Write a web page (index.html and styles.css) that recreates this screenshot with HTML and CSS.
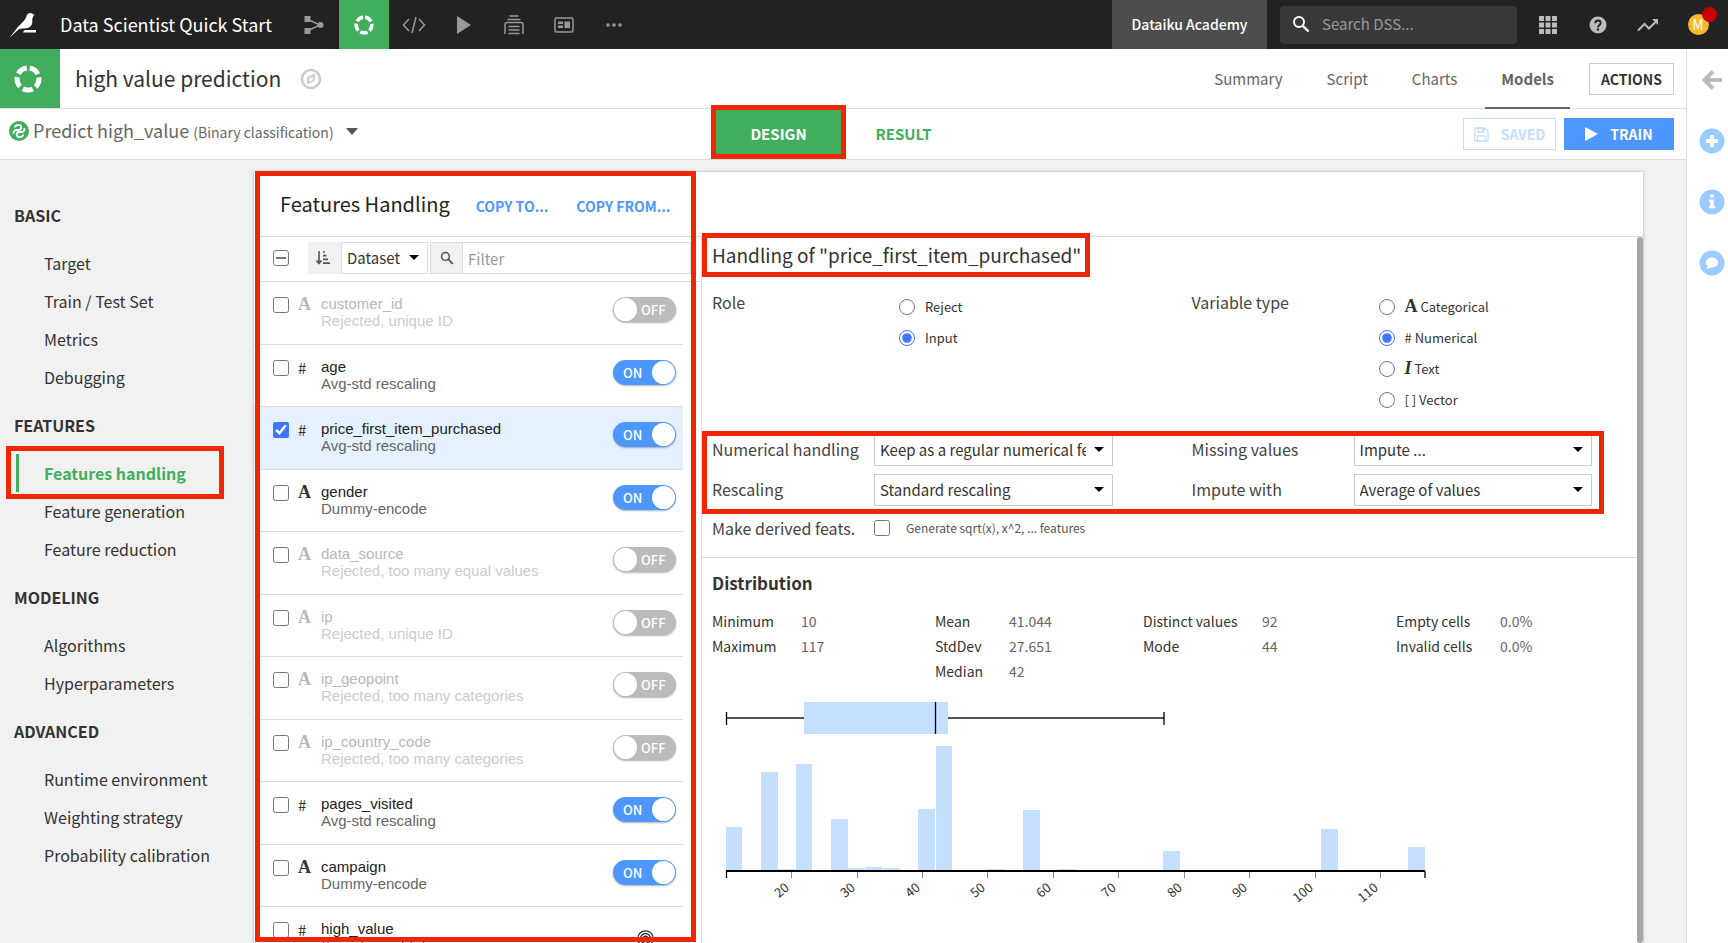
FILE: index.html
```html
<!DOCTYPE html>
<html lang="en">
<head>
<meta charset="utf-8">
<title>high value prediction</title>
<link rel="stylesheet" href="styles.css">
</head>
<body>
<svg class="defs" aria-hidden="true">
  <symbol id="lab" viewBox="0 0 28 28">
    <circle cx="14" cy="14" r="11" fill="none" stroke="currentColor" stroke-width="5" stroke-dasharray="10.4 3.42" stroke-dashoffset="-1.71" transform="rotate(-90 14 14)"/>
  </symbol>
  <symbol id="search" viewBox="0 0 18 18">
    <circle cx="7" cy="7" r="5" fill="none" stroke="currentColor" stroke-width="2"/>
    <path d="M10.8 10.8 16.5 16.5" stroke="currentColor" stroke-width="2.4"/>
  </symbol>
</svg>

<header class="topbar">
  <a class="logo" href="#" aria-label="Home">
    <svg width="28" height="26" viewBox="0 0 28 26"><path fill="#fff" d="M25.5 3 22.6 1.3C20 .4 18 1.9 17.4 4.4 16.8 7 13 11 9.5 14.3L.5 25.8 9.8 17.2C12 16 14 16.6 17 16.2 21.500 15.600 23.500 13 23.300 9 23.200 6.500 23.600 4.500 25.500 3ZM14.500 19.200 16 18h11v2.500H14z"/></svg>
  </a>
  <a class="project" href="#">Data Scientist Quick Start</a>
  <nav class="apps" aria-label="Project sections">
    <a href="#" aria-label="Flow"><svg width="20" height="20" viewBox="0 0 20 20"><path d="M3 4 16 10 3 16" fill="none" stroke="currentColor" stroke-width="1.500"/><path fill="currentColor" d="M.5 1h6v6h-6zM.5 13h6v6h-6z"/><circle cx="16.500" cy="10" r="3" fill="currentColor"/></svg></a>
    <a class="current" href="#" aria-label="Lab"><svg width="20" height="20"><use href="#lab"/></svg></a>
    <a href="#" aria-label="Code"><svg width="24" height="20" viewBox="0 0 24 20"><path d="M7 4 1.500 10 7 16M17 4l5.500 6L17 16M14 2 10 18" fill="none" stroke="currentColor" stroke-width="1.500"/></svg></a>
    <a href="#" aria-label="Jobs"><svg width="14" height="18" viewBox="0 0 14 18"><path d="M0 0 14 9 0 18z" fill="currentColor"/></svg></a>
    <a href="#" aria-label="Automation"><svg width="20" height="20" viewBox="0 0 20 20"><path d="M5.500 1h9M3.500 4.500h13M1 19V9.500Q1 7.500 3 7.500h14q2 0 2 2V19M4.500 11.500h11M4.500 15h11M4.500 18.500h11" fill="none" stroke="currentColor" stroke-width="1.500"/></svg></a>
    <a href="#" aria-label="Dashboards"><svg width="20" height="16" viewBox="0 0 20 16"><rect x="1" y="1" width="18" height="14" rx="1.500" fill="none" stroke="currentColor" stroke-width="1.500"/><path d="M4 4.500h5V7H4zM4 8.500h5V11H4zM10.500 4.500H16V11h-5.500z" fill="currentColor"/></svg></a>
    <a href="#" aria-label="More"><svg width="16" height="4" viewBox="0 0 16 4"><g fill="currentColor"><circle cx="2" cy="2" r="1.800"/><circle cx="8" cy="2" r="1.800"/><circle cx="14" cy="2" r="1.800"/></g></svg></a>
  </nav>
  <a class="academy" href="#">Dataiku Academy</a>
  <label class="search">
    <svg width="18" height="18"><use href="#search"/></svg>
    <input type="search" placeholder="Search DSS..." aria-label="Search DSS">
  </label>
  <nav class="tools" aria-label="Account">
    <a href="#" aria-label="Applications"><svg width="18" height="18" viewBox="0 0 18 18"><path fill="currentColor" d="M0 0h5v5H0zM6.500 0h5v5h-5zM13 0h5v5h-5zM0 6.500h5v5H0zM6.500 6.500h5v5h-5zM13 6.500h5v5h-5zM0 13h5v5H0zM6.500 13h5v5h-5zM13 13h5v5h-5z"/></svg></a>
    <a href="#" aria-label="Help"><svg width="18" height="18" viewBox="0 0 18 18"><circle cx="9" cy="9" r="8.500" fill="currentColor"/><path d="M6.300 7.200Q6.300 4.500 9 4.500T11.700 7Q11.700 8.300 10.300 9.200 9 10 9 11.500" fill="none" stroke="#222" stroke-width="1.800"/><circle cx="9" cy="13.600" r="1.200" fill="#222"/></svg></a>
    <a href="#" aria-label="Activity"><svg width="22" height="14" viewBox="0 0 22 14"><path d="M1 12.500 7.500 6l4.500 4.500L19.500 3" fill="none" stroke="currentColor" stroke-width="2"/><path d="M15 1h6v6z" fill="currentColor"/></svg></a>
    <a href="#" aria-label="Profile"><span class="avatar">M<span class="badge"></span></span></a>
  </nav>
</header>

<div class="shell">
  <div class="page">
    <div class="titlebar">
      <span class="lab-tile"><svg width="28" height="28"><use href="#lab"/></svg></span>
      <h1>high value prediction</h1>
      <svg class="compass" width="22" height="22" viewBox="0 0 22 22"><circle cx="11" cy="11" r="9" fill="none" stroke="#ccc" stroke-width="2.500"/><path d="M14.800 5.500v7.200L7.200 16.500V9.300zM9.200 10.500v3.300l3.500-1.800V8.700z" fill="#ccc" fill-rule="evenodd"/></svg>
      <nav class="tabs" aria-label="Analysis">
        <a href="#">Summary</a><a href="#">Script</a><a href="#">Charts</a><a class="current" href="#">Models</a>
      </nav>
      <button class="actions" type="button">ACTIONS</button>
    </div>

    <div class="taskbar">
      <button class="task" type="button">
        <svg width="20" height="20" viewBox="0 0 20 20"><circle cx="10" cy="10" r="10" fill="#41ae5e"/><path d="M5.800 6.500Q6 4 9.300 4T12.200 6.500Q12.200 9 9.500 9H8Q4.500 9 4.500 12.800M14.200 13.500Q14 16 10.700 16T7.800 13.500Q7.800 11 10.500 11H12Q15.500 11 15.500 7.200" fill="none" stroke="#fff" stroke-width="1.900"/></svg>
        <span>Predict high_value <small>(Binary classification)</small></span>
        <i class="caret"></i>
      </button>
      <div class="modes">
        <button class="mode design" type="button">DESIGN</button>
        <button class="mode" type="button">RESULT</button>
      </div>
      <div class="task-actions">
        <button class="saved" type="button" disabled><svg width="15" height="15" viewBox="0 0 15 15"><path d="M1 1h10l3 3v10H1zM4 1v4h6V1M3.500 14V9h8v5" fill="none" stroke="currentColor" stroke-width="1.300"/><path d="M8 1.500h1.500V4H8z" fill="currentColor"/></svg>SAVED</button>
        <button class="train" type="button"><svg width="13" height="14" viewBox="0 0 13 14"><path d="M0 0 13 7 0 14z" fill="currentColor"/></svg>TRAIN</button>
      </div>
    </div>

    <div class="workspace">
      <nav class="sidenav" aria-label="Design settings">
        <h2>BASIC</h2>
        <ul><li><a href="#">Target</a></li><li><a href="#">Train / Test Set</a></li><li><a href="#">Metrics</a></li><li><a href="#">Debugging</a></li></ul>
        <h2>FEATURES</h2>
        <ul><li class="current"><a href="#">Features handling</a></li><li><a href="#">Feature generation</a></li><li><a href="#">Feature reduction</a></li></ul>
        <h2>MODELING</h2>
        <ul><li><a href="#">Algorithms</a></li><li><a href="#">Hyperparameters</a></li></ul>
        <h2>ADVANCED</h2>
        <ul><li><a href="#">Runtime environment</a></li><li><a href="#">Weighting strategy</a></li><li><a href="#">Probability calibration</a></li></ul>
      </nav>

      <main class="card">
        <section class="features">
          <div class="features-head">
            <h2>Features Handling</h2>
            <button type="button">COPY TO...</button>
            <button type="button">COPY FROM...</button>
          </div>
          <div class="filters">
            <input class="some" type="checkbox" aria-label="Select all features">
            <span class="addon sort"><svg width="14" height="14" viewBox="0 0 14 14"><path d="M3 0v12M.5 9.500 3 12.500l2.500-3" fill="none" stroke="currentColor" stroke-width="1.600"/><path d="M7 1h2M7 4.700h3.500M7 8.400h5M7 12.200h7" stroke="currentColor" stroke-width="1.700"/></svg></span>
            <span class="select by"><select aria-label="Sort by"><option>Dataset</option></select></span>
            <span class="addon find"><svg width="14" height="14"><use href="#search"/></svg></span>
            <input class="filter" type="text" placeholder="Filter" aria-label="Filter features">
          </div>
          <ul class="rows">
            <li class="off"><input type="checkbox" aria-label="Select customer_id"><b class="kind letter">A</b><div class="name">customer_id<span>Rejected, unique ID</span></div><label class="toggle"><input type="checkbox"><span>OFF</span></label></li>
            <li><input type="checkbox" aria-label="Select age"><b class="kind">#</b><div class="name">age<span>Avg-std rescaling</span></div><label class="toggle"><input type="checkbox" checked><span>ON</span></label></li>
            <li class="selected"><input type="checkbox" checked aria-label="Select price_first_item_purchased"><b class="kind">#</b><div class="name">price_first_item_purchased<span>Avg-std rescaling</span></div><label class="toggle"><input type="checkbox" checked><span>ON</span></label></li>
            <li><input type="checkbox" aria-label="Select gender"><b class="kind letter">A</b><div class="name">gender<span>Dummy-encode</span></div><label class="toggle"><input type="checkbox" checked><span>ON</span></label></li>
            <li class="off"><input type="checkbox" aria-label="Select data_source"><b class="kind letter">A</b><div class="name">data_source<span>Rejected, too many equal values</span></div><label class="toggle"><input type="checkbox"><span>OFF</span></label></li>
            <li class="off"><input type="checkbox" aria-label="Select ip"><b class="kind letter">A</b><div class="name">ip<span>Rejected, unique ID</span></div><label class="toggle"><input type="checkbox"><span>OFF</span></label></li>
            <li class="off"><input type="checkbox" aria-label="Select ip_geopoint"><b class="kind letter">A</b><div class="name">ip_geopoint<span>Rejected, too many categories</span></div><label class="toggle"><input type="checkbox"><span>OFF</span></label></li>
            <li class="off"><input type="checkbox" aria-label="Select ip_country_code"><b class="kind letter">A</b><div class="name">ip_country_code<span>Rejected, too many categories</span></div><label class="toggle"><input type="checkbox"><span>OFF</span></label></li>
            <li><input type="checkbox" aria-label="Select pages_visited"><b class="kind">#</b><div class="name">pages_visited<span>Avg-std rescaling</span></div><label class="toggle"><input type="checkbox" checked><span>ON</span></label></li>
            <li><input type="checkbox" aria-label="Select campaign"><b class="kind letter">A</b><div class="name">campaign<span>Dummy-encode</span></div><label class="toggle"><input type="checkbox" checked><span>ON</span></label></li>
            <li><input type="checkbox" aria-label="Select high_value"><b class="kind">#</b><div class="name">high_value<span>(target variable)</span></div><svg class="target" width="17" height="17" viewBox="0 0 17 17"><g fill="none" stroke="#333" stroke-width="1.300"><circle cx="8.500" cy="8.500" r="7.700"/><circle cx="8.500" cy="8.500" r="5"/><circle cx="8.500" cy="8.500" r="2.300"/></g></svg></li>
          </ul>
        </section>

        <section class="detail">
          <div class="detail-head"></div>
          <div class="detail-scroll">
            <div class="detail-body">
              <h2 class="detail-title">Handling of "price_first_item_purchased"</h2>
              <div class="settings types">
                <span class="caption" id="role">Role</span>
                <div class="radios" role="radiogroup" aria-labelledby="role">
                  <label><input type="radio" name="role">Reject</label>
                  <label><input type="radio" name="role" checked>Input</label>
                </div>
                <span class="caption second" id="vtype">Variable type</span>
                <div class="radios" role="radiogroup" aria-labelledby="vtype">
                  <label><input type="radio" name="vtype"><span><b class="glyph">A</b> Categorical</span></label>
                  <label><input type="radio" name="vtype" checked>#&nbsp;Numerical</label>
                  <label><input type="radio" name="vtype"><span><b class="glyph slanted">I</b> Text</span></label>
                  <label><input type="radio" name="vtype">[&nbsp;]&nbsp;Vector</label>
                </div>
              </div>
              <div class="settings handling">
                <label class="caption" for="handling">Numerical handling</label>
                <span class="select"><select id="handling"><option>Keep as a regular numerical feature</option></select></span>
                <label class="caption second" for="missing">Missing values</label>
                <span class="select"><select id="missing"><option>Impute ...</option></select></span>
                <label class="caption" for="rescaling">Rescaling</label>
                <span class="select"><select id="rescaling"><option>Standard rescaling</option></select></span>
                <label class="caption second" for="impute">Impute with</label>
                <span class="select"><select id="impute"><option>Average of values</option></select></span>
              </div>
              <div class="settings derived">
                <span class="caption">Make derived feats.</span>
                <label><input type="checkbox">Generate sqrt(x), x^2, ... features</label>
              </div>
              <div class="distribution">
                <h3>Distribution</h3>
                <table>
                  <tr><th>Minimum</th><td>10</td><th>Mean</th><td>41.044</td><th>Distinct values</th><td>92</td><th>Empty cells</th><td>0.0%</td></tr>
                  <tr><th>Maximum</th><td>117</td><th>StdDev</th><td>27.651</td><th>Mode</th><td>44</td><th>Invalid cells</th><td>0.0%</td></tr>
                  <tr><th></th><td></td><th>Median</th><td>42</td><th></th><td></td><th></th><td></td></tr>
                </table>
                <svg class="chart" width="724" height="224" viewBox="0 0 724 224" role="img" aria-label="Box plot and histogram">
                  <g transform="translate(14 0)">
                    <path d="M0 28H438" stroke="#555" stroke-width="2"/>
                    <path d="M.5 22v13M438 22v13" stroke="#000" stroke-width="1.300"/>
                    <path fill="#c4dfff" d="M78 12h144v32H78z"/>
                    <path d="M209.500 12v32" stroke="#000" stroke-width="1.300"/>
                    <path fill="#c4dfff" d="M0 137h16v43H0zM35 82h17v98H35zM70 74h16v106H70zM105 129h17v51H105zM192 119h17v61H192zM210 56h16v124H210zM297 120h17v60H297zM437 161h17v19H437zM595 139h17v41H595zM682 157h17v23H682zM140 177h16v3H140zM122 178h17v2H122zM157 178h17v2H157zM52 179h17v1H52zM262 179h17v1H262zM332 179h17v1H332z"/>
                    <path d="M65.500 182v6M131.500 182v6M196.500 182v6M261.500 182v6M327.500 182v6M392.500 182v6M458.500 182v6M523.500 182v6M589.500 182v6M654.500 182v6" stroke="#888"/>
                    <path d="M0 181H699" stroke="#000" stroke-width="2"/>
                    <path d="M.5 181v7M699 181v7" stroke="#000" stroke-width="1.300"/>
                    <g class="ticks">
                      <text transform="translate(64 199) rotate(-40)">20</text>
                      <text transform="translate(130 199) rotate(-40)">30</text>
                      <text transform="translate(195 199) rotate(-40)">40</text>
                      <text transform="translate(260 199) rotate(-40)">50</text>
                      <text transform="translate(326 199) rotate(-40)">60</text>
                      <text transform="translate(391 199) rotate(-40)">70</text>
                      <text transform="translate(457 199) rotate(-40)">80</text>
                      <text transform="translate(522 199) rotate(-40)">90</text>
                      <text transform="translate(588 199) rotate(-40)">100</text>
                      <text transform="translate(653 199) rotate(-40)">110</text>
                    </g>
                  </g>
                </svg>
              </div>
            </div>
            <div class="scrollbar"></div>
          </div>
        </section>
      </main>
    </div>
  </div>

  <aside class="rail">
    <button type="button" aria-label="Open panel"><svg width="20" height="20" viewBox="0 0 20 20"><path d="M11 1.500 2.500 10l8.500 8.500M3 10h17" fill="none" stroke="#bbb" stroke-width="4"/></svg></button>
    <button type="button" aria-label="Add"><svg width="26" height="26" viewBox="0 0 26 26"><circle cx="13" cy="13" r="12.500" fill="#9accff"/><path d="M13 7v12M7 13h12" stroke="#fff" stroke-width="4"/></svg></button>
    <button type="button" aria-label="Details"><svg width="26" height="26" viewBox="0 0 26 26"><circle cx="13" cy="13" r="12.500" fill="#9accff"/><path d="M11.200 5.500h3.600v3h-3.600zM9.800 10.500h5v6.500h1.400v2.300H9.800V17h1.400v-4.200H9.800z" fill="#fff"/></svg></button>
    <button type="button" aria-label="Discussions"><svg width="26" height="26" viewBox="0 0 26 26"><circle cx="13" cy="13" r="12.500" fill="#9accff"/><ellipse cx="13" cy="12.500" rx="6.300" ry="5" fill="#fff"/><path d="M9 15.500 7.500 19.200 13 17z" fill="#fff"/></svg></button>
  </aside>
</div>
</body>
</html>
```

FILE: styles.css
```css
* { box-sizing: border-box; }

:root {
  --ui: "Noto Sans CJK SC", "Noto Sans", sans-serif;
  --green: #41ae5e;
  --blue: #4e97fe;
  --line: #ddd;
  --mark: #ee2700;
}

body {
  margin: 0;
  height: 100vh;
  display: flex;
  flex-direction: column;
  overflow: hidden;
  background: #fff;
  color: #333;
  font-family: var(--ui);
  font-size: 14px;
  line-height: 20px;
}

.defs { display: none; }
svg { display: block; flex: none; }
a { color: inherit; text-decoration: none; }
h1, h2, h3, ul { margin: 0; padding: 0; font-weight: 400; }
ul { list-style: none; }
button, input, select { font: inherit; color: inherit; }
button { padding: 0; border: 0; background: none; cursor: pointer; }
input[type="checkbox"], input[type="radio"] {
  flex: none;
  width: 16px;
  height: 16px;
  margin: 0;
  accent-color: #4076ff;
}

/* Top bar */
.topbar {
  flex: none;
  display: flex;
  align-items: center;
  height: 49px;
  padding-right: 5px;
  background: #222;
  color: #fff;
}
.logo { width: 60px; padding-left: 9px; }
.project { width: 229px; padding-bottom: 2px; font-size: 18px; white-space: nowrap; }
.apps, .tools { display: flex; align-self: stretch; }
.apps a, .tools a {
  width: 50px;
  display: flex;
  align-items: center;
  justify-content: center;
  color: #999;
}
.tools a { color: #bbb; }
.apps .current { background: var(--green); color: #fff; }
.academy {
  align-self: stretch;
  width: 155px;
  margin-left: auto;
  background: #4d4d4d;
  font-weight: 500;
  line-height: 49px;
  text-align: center;
}
.search {
  display: flex;
  align-items: center;
  gap: 10px;
  width: 237px;
  height: 38px;
  margin: 0 6px 0 13px;
  padding: 0 12px 2px;
  border-radius: 4px;
  background: #383838;
}
.search input {
  width: 100%;
  min-width: 0;
  border: 0;
  outline: 0;
  background: none;
  font-size: 15px;
}
.search input::placeholder { color: #999; }
.avatar {
  position: relative;
  width: 21px;
  height: 21px;
  border-radius: 50%;
  background: #f4b92f;
  color: #fff;
  font-size: 14px;
  text-align: center;
}
.badge {
  position: absolute;
  top: -7px;
  right: -8px;
  width: 15px;
  height: 15px;
  border-radius: 50%;
  background: #c80000;
}

/* Shell */
.shell { flex: 1; min-height: 0; display: flex; }
.page { flex: 1; min-width: 0; display: flex; flex-direction: column; }
.rail {
  width: 42px;
  border-left: 1px solid var(--line);
  padding: 15px 0 0 9px;
}
.rail button {
  display: flex;
  align-items: center;
  justify-content: center;
  width: 32px;
  height: 32px;
  margin-bottom: 29px;
}

.titlebar {
  flex: none;
  display: flex;
  align-items: center;
  height: 60px;
  padding-right: 12px;
  border-bottom: 1px solid var(--line);
}
.lab-tile {
  display: flex;
  align-items: center;
  justify-content: center;
  align-self: stretch;
  width: 60px;
  padding-right: 4px;
  background: var(--green);
  color: #fff;
}
.titlebar h1 { margin-left: 15px; padding-bottom: 2px; font-size: 21px; line-height: 32px; }
.compass { margin-left: 19px; }
.tabs { display: flex; align-self: stretch; gap: 12px; margin-left: auto; }
.tabs a {
  height: 60px;
  padding: 0 16px;
  color: #666;
  font-size: 15px;
  line-height: 59px;
}
.tabs .current { border-bottom: 2px solid #666; font-weight: 700; }
.actions {
  width: 85px;
  height: 32px;
  margin-left: 19px;
  border: 1px solid #ccc;
  font-weight: 700;
}

.taskbar {
  flex: none;
  display: grid;
  grid-template-columns: 716px auto 1fr;
  align-items: center;
  height: 51px;
  padding-right: 12px;
  border-bottom: 1px solid var(--line);
}
.task {
  display: flex;
  align-items: center;
  gap: 4px;
  padding: 0 0 6px 9px;
  color: #666;
  font-size: 18px;
  line-height: 24px;
}
.task small { font-size: 14px; }
.caret {
  margin-left: 8px;
  border: 6px solid transparent;
  border-top: 7px solid #555;
  border-bottom: 0;
}
.modes { display: flex; padding-bottom: 4px; }
.mode {
  width: 125px;
  height: 44px;
  padding-top: 3px;
  color: var(--green);
  font-size: 15px;
  font-weight: 700;
}
.design {
  position: relative;
  z-index: 1;
  background: var(--green);
  color: #fff;
  outline: 5px solid var(--mark);
}
.task-actions { display: flex; justify-content: flex-end; gap: 8px; }
.saved, .train {
  display: flex;
  align-items: center;
  justify-content: center;
  gap: 12px;
  height: 32px;
  font-weight: 700;
}
.saved { width: 93px; border: 1px solid #c2e0ff; color: #c2e0ff; }
.train { width: 110px; background: var(--blue); color: #fff; }

/* Workspace */
.workspace {
  flex: 1;
  min-height: 0;
  display: flex;
  overflow: hidden;
  background: #f1f1f1;
}
.sidenav { flex: none; width: 254px; padding-top: 26px; font-size: 16px; }
.sidenav h2 {
  padding-left: 14px;
  font-size: 16px;
  font-weight: 700;
  line-height: 58px;
}
.sidenav li { line-height: 38px; padding-left: 44px; }
.sidenav .current {
  position: relative;
  margin-left: 16px;
  padding-left: 25px;
  border-left: 3px solid var(--green);
  color: var(--green);
  font-weight: 700;
}
.sidenav .current::after {
  content: "";
  position: absolute;
  inset: -8px 30px -7px -13px;
  border: 5px solid var(--mark);
}

.card {
  flex: 1;
  min-width: 0;
  display: flex;
  margin: 12px 43px 0 0;
  background: #fff;
  box-shadow: 0 0 3px rgba(0, 0, 0, 0.3);
}
.features {
  flex: none;
  position: relative;
  display: flex;
  flex-direction: column;
  width: 447px;
}
.features::after {
  content: "";
  position: absolute;
  inset: -1px 5px 1px 1px;
  border: 5px solid var(--mark);
  pointer-events: none;
}
.features-head, .detail-head {
  flex: none;
  height: 65px;
  border-bottom: 1px solid var(--line);
}
.features-head { display: flex; align-items: baseline; padding: 18px 0 0 26px; }
.features-head h2 { margin-right: 26px; color: #222; font-size: 20px; line-height: 28px; }
.features-head button {
  margin-right: 28px;
  color: var(--blue);
  font-weight: 700;
}
.filters {
  flex: none;
  display: flex;
  align-items: center;
  height: 45px;
  padding: 0 10px 2px 19px;
  border-bottom: 1px solid var(--line);
}
.filters .some {
  appearance: none;
  display: grid;
  place-items: center;
  margin-right: 19px;
  border: 1px solid #767676;
  border-radius: 3px;
}
.some::before { content: ""; width: 10px; height: 2px; background: #767676; }
.addon {
  display: flex;
  align-items: center;
  justify-content: center;
  width: 33px;
  height: 32px;
  padding-right: 3px;
  background: #f1f1f1;
  color: #555;
}
.find { width: 32px; margin-left: 2px; padding: 0; border: 1px solid var(--line); border-right: 0; }
.filter {
  flex: 1;
  min-width: 0;
  height: 32px;
  padding: 0 5px;
  border: 1px solid var(--line);
  font-size: 15px;
}
.filter::placeholder { color: #999; }

.select { position: relative; display: block; }
.select select {
  appearance: none;
  width: 100%;
  height: 32px;
  padding: 0 26px 0 5px;
  border: 1px solid #ccc;
  border-radius: 0;
  background: #fff;
  font-size: 15px;
}
.select::after {
  content: "";
  position: absolute;
  top: 13px;
  right: 9px;
  border: 5px solid transparent;
  border-top-color: #000;
  border-bottom: 0;
  pointer-events: none;
}
.by { width: 87px; }
.by select { border-color: var(--line); }

.rows { flex: 1; min-height: 0; overflow: hidden; padding-right: 18px; }
.rows li {
  display: flex;
  height: 63px;
  padding: 15px 7px 0 19px;
  border-bottom: 1px solid var(--line);
  font: 15px/17px "Liberation Sans", Arial, sans-serif;
}
.rows li:nth-child(even) { height: 62px; }
.rows .selected { background: #e5f1ff; }
.kind {
  width: 32px;
  padding-left: 9px;
  font: 400 15px/16px var(--ui);
}
.kind.letter { font: 700 18px/14px "Liberation Serif", "Times New Roman", serif; }
.name { flex: 1; margin-top: -2px; color: #222; white-space: nowrap; }
.name span { display: block; color: #666; }
.off .kind, .off .name { color: #b8b8b8; }
.off .name span { color: #ccc; }
.toggle {
  position: relative;
  height: 25px;
  color: #fff;
  font: 500 13px/25px var(--ui);
}
.toggle input[type="checkbox"] {
  appearance: none;
  display: flex;
  width: 63px;
  height: 25px;
  padding: 1px;
  border-radius: 13px;
  background: #bbb;
  box-shadow: 0 1px 2px rgba(0, 0, 0, 0.3);
}
.toggle input::before {
  content: "";
  width: 23px;
  height: 23px;
  border-radius: 50%;
  background: #fff;
}
.toggle input[type="checkbox"]:checked { justify-content: flex-end; background: var(--blue); }
.toggle span { position: absolute; top: 0; left: 28px; }
.toggle input:checked + span { left: 10px; }
.target { margin: 8px 22px 0 0; }

/* Detail */
.detail { flex: 1; min-width: 0; display: flex; flex-direction: column; }
.detail-scroll { flex: 1; min-height: 0; display: flex; }
.detail-body { flex: 1; min-width: 0; border-left: 1px solid var(--line); }
.scrollbar { flex: none; width: 6px; border-radius: 3px; background: #a6a6a6; }
.detail-title {
  width: max-content;
  margin: 1px 0 20px 5px;
  padding: 0 4px 0 5px;
  font-size: 19px;
  line-height: 34px;
  outline: 5px solid var(--mark);
}
.settings {
  display: grid;
  grid-template-columns: 162px 1fr 241px 1fr;
  margin: 0 45px 0 10px;
}
.caption { color: #444; font-size: 16px; }
.second { padding-left: 79px; }
.radios { margin-top: -1px; padding-left: 25px; font-size: 13px; }
.radios label { display: flex; align-items: center; gap: 10px; height: 31px; }
.glyph { font: 700 18px/16px "Liberation Serif", "Times New Roman", serif; }
.slanted { font-style: italic; }
.handling {
  position: relative;
  row-gap: 8px;
  margin-top: 19px;
}
.handling .caption { line-height: 30px; }
.handling::after {
  content: "";
  position: absolute;
  inset: -3px -12px -8px -10px;
  border: 5px solid var(--mark);
  pointer-events: none;
}
.derived { grid-template-columns: 162px 1fr; align-items: center; margin-top: 12px; }
.derived label {
  display: flex;
  align-items: center;
  gap: 16px;
  color: #555;
  font-size: 12px;
}
.distribution {
  margin-top: 19px;
  padding: 13px 0 0 10px;
  border-top: 1px solid var(--line);
}
.distribution h3 { font-size: 17px; font-weight: 700; line-height: 24px; }
.distribution table {
  margin: 13px 0 7px;
  border-collapse: collapse;
  table-layout: fixed;
  width: 880px;
}
.distribution tr { height: 25px; }
.distribution th, .distribution td { padding: 0; text-align: left; font-weight: 400; }
.distribution th:nth-child(1) { width: 89px; }
.distribution th:nth-child(3) { width: 74px; }
.distribution th:nth-child(5) { width: 119px; }
.distribution th:nth-child(7) { width: 104px; }
.distribution td { width: 134px; color: #666; }
.distribution td:last-child { width: auto; }
.ticks { fill: #333; font-size: 13px; text-anchor: end; }
```
